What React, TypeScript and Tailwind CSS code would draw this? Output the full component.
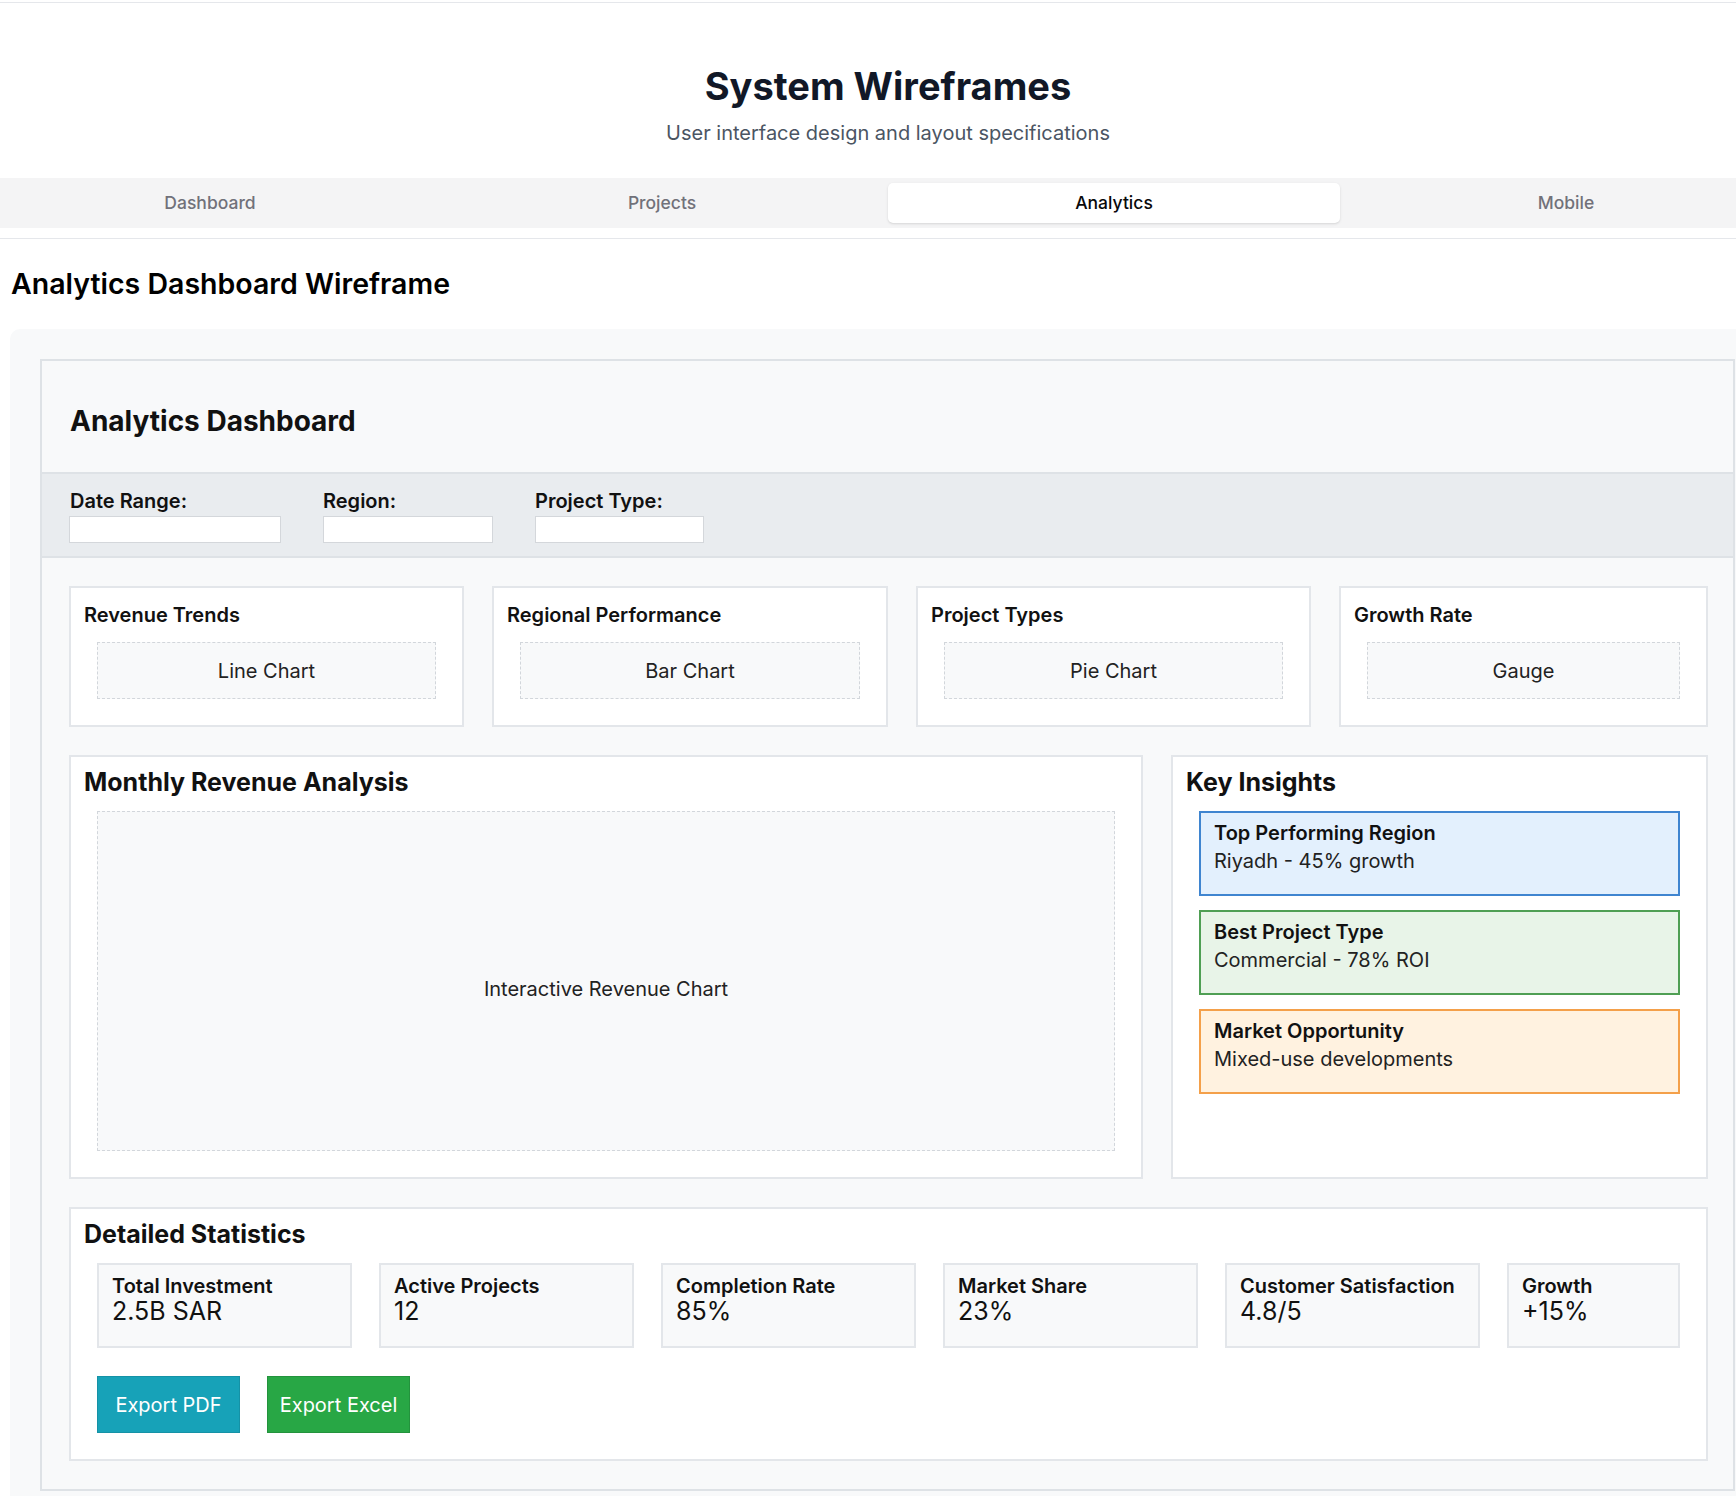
import React from 'react';

const tabs = ['Dashboard', 'Projects', 'Analytics', 'Mobile'];

const charts = [
  { title: 'Revenue Trends', label: 'Line Chart' },
  { title: 'Regional Performance', label: 'Bar Chart' },
  { title: 'Project Types', label: 'Pie Chart' },
  { title: 'Growth Rate', label: 'Gauge' },
];

const insights = [
  { title: 'Top Performing Region', text: 'Riyadh - 45% growth', className: 'bg-[#e3f0fd] border-[#3f85d0]' },
  { title: 'Best Project Type', text: 'Commercial - 78% ROI', className: 'bg-[#e8f4e8] border-[#4f9f54]' },
  { title: 'Market Opportunity', text: 'Mixed-use developments', className: 'bg-[#fff2e0] border-[#f4a04a]' },
];

const stats = [
  { label: 'Total Investment', value: '2.5B SAR' },
  { label: 'Active Projects', value: '12' },
  { label: 'Completion Rate', value: '85%' },
  { label: 'Market Share', value: '23%' },
  { label: 'Customer Satisfaction', value: '4.8/5' },
  { label: 'Growth', value: '+15%' },
];

const App = () => {
  return (
    <div className="min-h-screen w-full overflow-hidden bg-white pt-[2px] font-[Inter,sans-serif] text-[#111]">
      {/* page is wider than the window and overflows on both sides */}
      <div className="-ml-[21px] w-[1818px] border-t border-[#e5e7eb]">
        {/* Page header */}
        <div className="pt-[60px] text-center">
          <h1 className="text-[38px] leading-[46px] font-bold text-[#111827]">System Wireframes</h1>
          <p className="mt-[10px] text-[20px] leading-7 text-[#4b5563]">
            User interface design and layout specifications
          </p>
        </div>

        {/* Tabs */}
        <div className="mt-[31px] grid h-[50px] grid-cols-4 rounded-[6px] bg-[#f4f4f5] p-[5px]">
          {tabs.map(tab => (
            <button
              key={tab}
              className={
                tab === 'Analytics'
                  ? 'rounded-[5px] bg-white text-[17.5px] font-medium text-[#09090b] shadow-sm'
                  : 'rounded-[5px] text-[17.5px] font-medium text-[#71717a]'
              }
            >
              {tab}
            </button>
          ))}
        </div>

        <div className="mt-[10px] border-t border-[#e5e7eb]" />

        <h2 className="mt-[27px] pl-[32px] text-[28.5px] leading-9 font-semibold text-black">
          Analytics Dashboard Wireframe
        </h2>

        {/* Wireframe canvas */}
        <div className="mt-[27px] ml-[31px] w-[1755px] rounded-[10px] bg-[#f8f9fa] p-[30px]">
          <div className="border-2 border-[#dee2e6] bg-[#f8f9fa]">
            {/* Header */}
            <div className="pt-[42px] pb-[33px] pl-[28px]">
              <h3 className="text-[28px] leading-9 font-bold">Analytics Dashboard</h3>
            </div>

            {/* Filters */}
            <div className="flex gap-[42px] border-y-2 border-[#dee2e6] bg-[#e9ecef] px-[27px] py-[13px]">
              <div className="flex flex-col">
                <label className="pl-[1px] text-[20px] leading-7 font-semibold">Date Range:</label>
                <input className="mt-[1px] h-[27px] w-[212px] border border-[#d4d7db] bg-white" />
              </div>
              <div className="flex flex-col">
                <label className="text-[20px] leading-7 font-semibold">Region:</label>
                <input className="mt-[1px] h-[27px] w-[170px] border border-[#d4d7db] bg-white" />
              </div>
              <div className="flex flex-col">
                <label className="text-[20px] leading-7 font-semibold">Project Type:</label>
                <input className="mt-[1px] h-[27px] w-[169px] border border-[#d4d7db] bg-white" />
              </div>
            </div>

            <div className="pt-[28px] pr-[25px] pb-[28px] pl-[27px]">
              {/* Chart widgets */}
              <div className="grid grid-cols-[395px_396px_395px_1fr] gap-[28px]">
                {charts.map(c => (
                  <div key={c.title} className="border-2 border-[#e3e6ea] bg-white p-[13px]">
                    <h4 className="text-[20px] leading-7 font-semibold">{c.title}</h4>
                    <div className="m-[13px] flex h-[57px] items-center justify-center border border-dashed border-[#d2d6db] bg-[#f8f9fa] text-[20px] text-[#222]">
                      {c.label}
                    </div>
                  </div>
                ))}
              </div>

              {/* Revenue + insights */}
              <div className="mt-[28px] grid grid-cols-[2fr_1fr] gap-[28px]">
                <div className="border-2 border-[#e3e6ea] bg-white px-[13px] pt-[10px] pb-[13px]">
                  <h4 className="text-[25px] leading-[30px] font-bold">Monthly Revenue Analysis</h4>
                  <div className="m-[13px] mt-[14px] flex h-[340px] items-center justify-center border border-dashed border-[#d2d6db] bg-[#f8f9fa] pt-[16px] text-[20px] text-[#222]">
                    Interactive Revenue Chart
                  </div>
                </div>
                <div className="border-2 border-[#e3e6ea] bg-white px-[13px] pt-[10px] pb-[13px]">
                  <h4 className="text-[25px] leading-[30px] font-bold">Key Insights</h4>
                  <div className="m-[13px] mt-[14px] flex flex-col gap-[14px]">
                    {insights.map(i => (
                      <div key={i.title} className={`h-[85px] border-2 px-[13px] pt-[8px] ${i.className}`}>
                        <div className="text-[20px] leading-[25px] font-semibold">{i.title}</div>
                        <div className="text-[20px] leading-[30px] text-[#222]">{i.text}</div>
                      </div>
                    ))}
                  </div>
                </div>
              </div>

              {/* Detailed statistics */}
              <div className="mt-[28px] border-2 border-[#e3e6ea] bg-white px-[13px] pt-[10px] pb-[13px]">
                <h4 className="text-[25px] leading-[30px] font-bold">Detailed Statistics</h4>
                <div className="m-[13px] mt-[14px]">
                  <div className="grid grid-cols-[255px_255px_255px_255px_255px_1fr] gap-[27px]">
                    {stats.map(s => (
                      <div key={s.label} className="h-[85px] border-2 border-[#e3e6ea] bg-[#f8f9fa] px-[13px] pt-[9px]">
                        <div className="text-[20px] leading-6 font-semibold">{s.label}</div>
                        <div className="text-[25px] leading-[26px] text-[#111]">{s.value}</div>
                      </div>
                    ))}
                  </div>
                  <div className="mt-[28px] flex gap-[27px]">
                    <button className="flex h-[57px] w-[143px] items-center justify-center border border-[#1592a6] bg-[#17a2b8] text-[20px] text-white">
                      Export PDF
                    </button>
                    <button className="flex h-[57px] w-[143px] items-center justify-center border border-[#23933d] bg-[#28a745] text-[20px] text-white">
                      Export Excel
                    </button>
                  </div>
                </div>
              </div>
            </div>
          </div>
        </div>
      </div>
    </div>
  );
};

export default App;
